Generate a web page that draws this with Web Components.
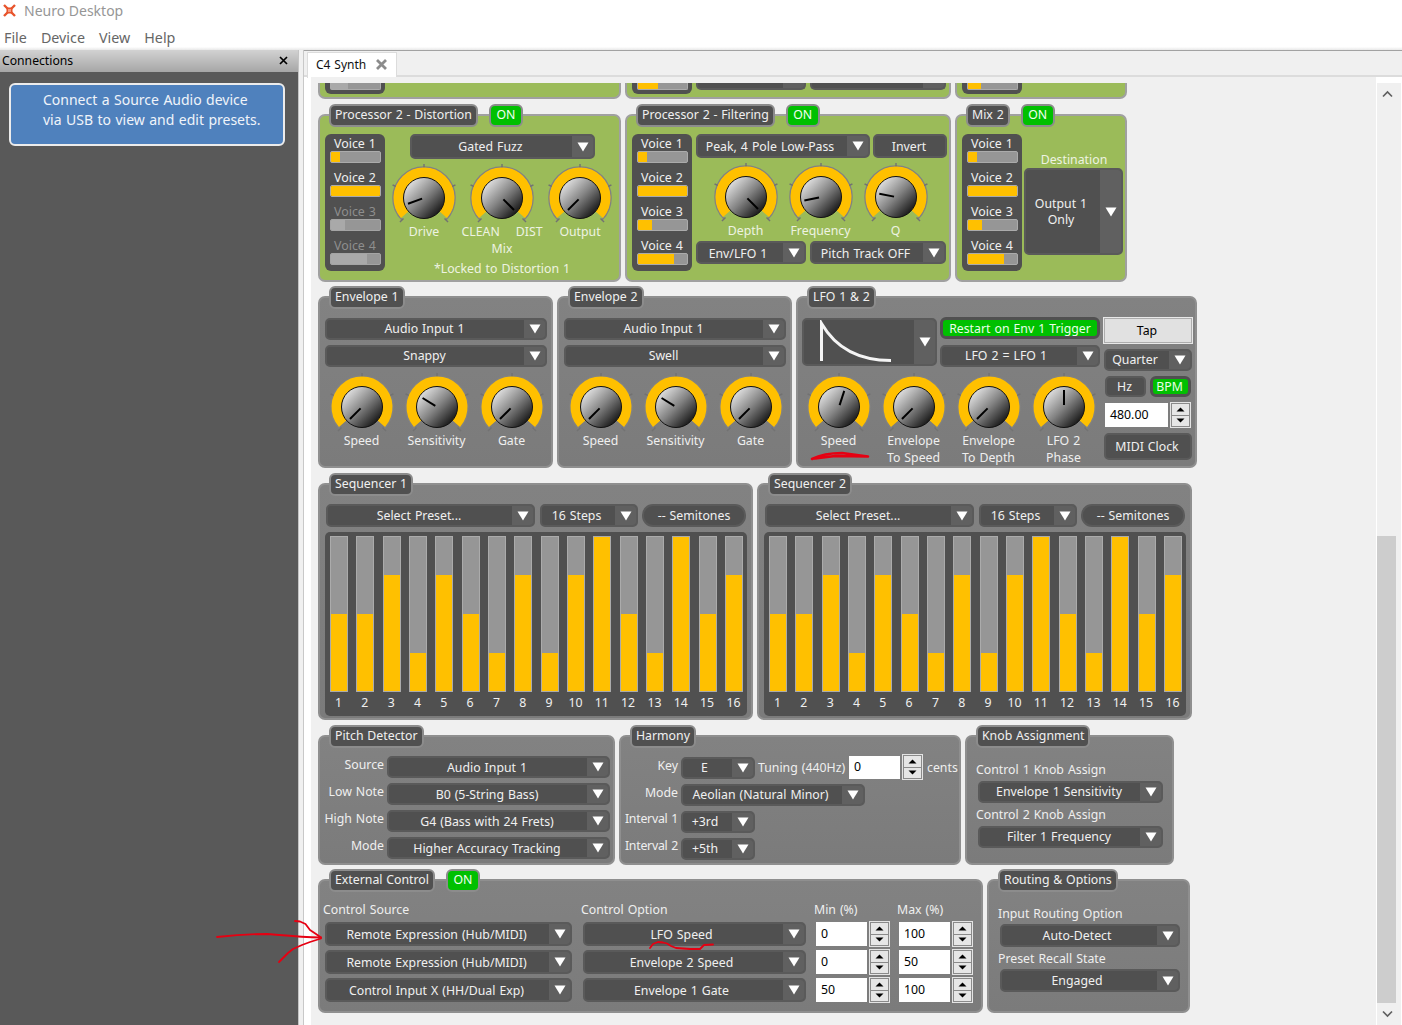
<!DOCTYPE html>
<html><head><meta charset="utf-8">
<style>
html,body{margin:0;padding:0;background:#fff;}
body{width:1402px;height:1025px;overflow:hidden;position:relative;font:12.3px/17px "Noto Sans","Liberation Sans",sans-serif;word-spacing:.8px;color:#f0f0f0;display:flex;flex-direction:column;}
.row{display:flex;align-items:flex-start;}
.col{display:flex;flex-direction:column;}
.lb{line-height:17px;white-space:nowrap;}
.c{text-align:center;}
.form{display:grid;row-gap:5px;}
.form>.lb{text-align:right;}
.form>.tight{letter-spacing:-.25px;margin-top:-1px;}
</style>
</head><body>
<n-titlebar>Neuro Desktop</n-titlebar>
<n-menubar><span>File</span><span>Device</span><span>View</span><span>Help</span></n-menubar>
<n-main>
  <n-sidepane slot="side" heading="Connections">
    <n-notice>Connect a Source Audio device<br>via USB to view and edit presets.</n-notice>
  </n-sidepane>
  <n-tabhost tab="C4 Synth" slot="work">
    <n-grouprow gap="4" top="0">
      <n-panel stub tone="green" style="width:303px">
        <div class="row" style="margin-left:5px"><n-stubvoice v="35" off></n-stubvoice></div>
      </n-panel>
      <n-panel stub tone="green" style="width:326px">
        <div class="row" style="margin-left:5px"><n-stubvoice v="40"></n-stubvoice><n-stubsel style="width:110px;margin-left:4px"></n-stubsel><n-stubsel style="width:136px;margin-left:4px"></n-stubsel></div>
      </n-panel>
      <n-panel stub tone="green" style="width:172px">
        <div class="row" style="margin-left:5px"><n-stubvoice v="27"></n-stubvoice></div>
      </n-panel>
    </n-grouprow>

    <n-grouprow gap="4" top="15">
      <n-panel label="Processor 2 - Distortion" on tone="green" style="width:303px;height:168px">
        <div class="row" style="margin:7px 0 0 5px">
          <n-voices values="18,100,29,74" off="2,3"></n-voices>
          <div class="col" style="width:234px">
            <n-select style="width:185px;height:25px;margin-left:25px;--tr:3px">Gated Fuzz</n-select>
            <div class="row" style="margin-top:4px">
              <n-knob angle="-110" style="width:78px">Drive</n-knob>
              <n-knob angle="135" style="width:78px"><span class="lb" style="display:flex;justify-content:center;gap:16px"><span>CLEAN</span><span>DIST</span></span>Mix</n-knob>
              <n-knob angle="-135" style="width:78px">Output</n-knob>
            </div>
            <div class="lb c" style="margin-top:3px;color:#eef3e2">*Locked to Distortion 1</div>
          </div>
        </div>
      </n-panel>
      <n-panel label="Processor 2 - Filtering" on tone="green" style="width:326px;height:168px">
        <div class="row" style="margin:7px 0 0 5px">
          <n-voices values="18,100,29,74"></n-voices>
          <div class="col" style="margin-left:4px">
            <div class="row">
              <n-select style="width:174px;height:24px;--tr:5px">Peak, 4 Pole Low-Pass</n-select>
              <n-button style="width:74px;height:24px;margin-left:3px;padding-top:1px;padding-bottom:0">Invert</n-button>
            </div>
            <div class="row" style="margin:4px 0 0 12px">
              <n-knob angle="135" style="width:75px">Depth</n-knob>
              <n-knob angle="-102" style="width:75px">Frequency</n-knob>
              <n-knob angle="-79" style="width:75px">Q</n-knob>
            </div>
            <div class="row" style="margin-top:2px">
              <n-select down style="width:110px;height:23px;--tr:5px">Env/LFO 1</n-select>
              <n-select down style="width:136px;height:23px;margin-left:4px;--tr:4px">Pitch Track OFF</n-select>
            </div>
          </div>
        </div>
      </n-panel>
      <n-panel label="Mix 2" on tone="green" style="width:172px;height:168px">
        <div class="row" style="margin:7px 0 0 5px">
          <n-voices values="18,100,29,74"></n-voices>
          <div class="col" style="margin:17px 0 0 2px">
            <div class="lb c" style="color:#eef3e2;width:100px">Destination</div>
            <n-select style="width:99px;height:87px;--tr:4px">Output 1<br>Only</n-select>
          </div>
        </div>
      </n-panel>
    </n-grouprow>

    <n-grouprow gap="4" top="14">
      <n-panel label="Envelope 1" style="width:235px;height:172px">
        <div class="col" style="margin:9px 0 0 5px;gap:5px">
          <n-select up style="width:222px;height:22px">Audio Input 1</n-select>
          <n-select up style="width:222px;height:22px">Snappy</n-select>
        </div>
        <div class="row" style="margin:5px 0 0 4px">
          <n-knob angle="-135" style="width:75px">Speed</n-knob>
          <n-knob angle="-58" style="width:75px">Sensitivity</n-knob>
          <n-knob angle="-135" style="width:75px">Gate</n-knob>
        </div>
      </n-panel>
      <n-panel label="Envelope 2" style="width:235px;height:172px">
        <div class="col" style="margin:9px 0 0 5px;gap:5px">
          <n-select up style="width:222px;height:22px">Audio Input 1</n-select>
          <n-select up style="width:222px;height:22px">Swell</n-select>
        </div>
        <div class="row" style="margin:5px 0 0 4px">
          <n-knob angle="-135" style="width:75px">Speed</n-knob>
          <n-knob angle="-58" style="width:75px">Sensitivity</n-knob>
          <n-knob angle="-135" style="width:75px">Gate</n-knob>
        </div>
      </n-panel>
      <n-panel label="LFO 1 &amp; 2" style="width:401px;height:172px">
        <div class="row" style="margin:8px 0 0 4px">
          <div class="col" style="width:301px">
            <div class="row">
              <n-select style="width:135px;height:48px;margin-top:1px"><svg width="100" height="46" viewBox="0 0 100 46" style="display:block;margin-left:8px"><path d="M9.5 41V3.500C22 25 42 40.500 79 40.500" fill="none" stroke="#f4f4f4" stroke-width="3"/></svg></n-select>
              <div class="col" style="margin-left:3px;gap:6px">
                <n-button kind="green" style="width:160px;height:22px">Restart on Env 1 Trigger</n-button>
                <n-select up style="width:160px;height:22px;--tr:7px">LFO 2 = LFO 1</n-select>
              </div>
            </div>
            <div class="row" style="margin-top:5px;margin-left:-1px">
              <n-knob angle="18" style="width:75px">Speed</n-knob>
              <n-knob angle="-135" style="width:75px">Envelope<br>To Speed</n-knob>
              <n-knob angle="-135" style="width:75px">Envelope<br>To Depth</n-knob>
              <n-knob angle="0" style="width:75px">LFO 2<br>Phase</n-knob>
            </div>
          </div>
          <div class="col" style="width:90px">
            <n-button kind="light" style="width:90px;height:27px">Tap</n-button>
            <n-select up style="width:88px;height:22px;margin:5px 0 0 1px;--tr:5px" >Quarter</n-select>
            <div class="row" style="margin:5px 0 0 2px;gap:4px">
              <n-button style="width:41px;height:21px">Hz</n-button>
              <n-button kind="green" style="width:41px;height:21px;padding-right:2px">BPM</n-button>
            </div>
            <div class="row" style="margin:5px 0 0 2px;gap:2px;align-items:center">
              <n-num style="width:63px;height:24px">480.00</n-num><n-spin></n-spin>
            </div>
            <n-button style="width:88px;height:27px;margin:5px 0 0 1px">MIDI Clock</n-button>
          </div>
        </div>
      </n-panel>
    </n-grouprow>

    <n-grouprow gap="4" top="15">
      <n-panel label="Sequencer 1" style="width:435px;height:237px">
        <div class="row" style="margin:8px 0 0 6px">
          <n-select style="width:209px;height:23px">Select Preset...</n-select>
          <n-select style="width:98px;height:23px;margin-left:5px;--tr:4px">16 Steps</n-select>
          <n-button round style="width:104px;height:23px;margin-left:4px;padding-right:0">-- Semitones</n-button>
        </div>
        <n-seq values="50,50,75,25,75,50,25,75,25,75,100,50,25,100,50,75" style="margin:5px 0 0 5px"></n-seq>
      </n-panel>
      <n-panel label="Sequencer 2" style="width:435px;height:237px">
        <div class="row" style="margin:8px 0 0 6px">
          <n-select style="width:209px;height:23px">Select Preset...</n-select>
          <n-select style="width:98px;height:23px;margin-left:5px;--tr:4px">16 Steps</n-select>
          <n-button round style="width:104px;height:23px;margin-left:4px;padding-right:0">-- Semitones</n-button>
        </div>
        <n-seq values="50,50,75,25,75,50,25,75,25,75,100,50,25,100,50,75" style="margin:5px 0 0 5px"></n-seq>
      </n-panel>
    </n-grouprow>

    <n-grouprow gap="4" top="15">
      <n-panel label="Pitch Detector" style="width:297px;height:130px">
        <div class="form" style="grid-template-columns:64px 223px;column-gap:3px;margin-top:8px;grid-auto-rows:22px">
          <div class="lb">Source</div><n-select>Audio Input 1</n-select>
          <div class="lb">Low Note</div><n-select>B0 (5-String Bass)</n-select>
          <div class="lb">High Note</div><n-select>G4 (Bass with 24 Frets)</n-select>
          <div class="lb">Mode</div><n-select>Higher Accuracy Tracking</n-select>
        </div>
      </n-panel>
      <n-panel label="Harmony" style="width:342px;height:130px">
        <div class="form" style="grid-template-columns:57px auto;column-gap:3px;margin-top:9px;grid-auto-rows:22px;justify-content:start">
          <div class="lb">Key</div>
          <div class="row" style="align-items:center;height:22px">
            <n-select up style="width:74px;height:22px;--tr:6px">E</n-select>
            <div class="lb" style="margin:0 0 2px 3px;width:91px">Tuning (440Hz)</div>
            <n-num style="width:51px;height:23px;margin-top:-1px">0</n-num>
            <n-spin style="margin:-2px 0 0 2px"></n-spin>
            <div class="lb" style="margin:0 0 2px 4px">cents</div>
          </div>
          <div class="lb">Mode</div><n-select up style="width:184px;--tr:4px">Aeolian (Natural Minor)</n-select>
          <div class="lb tight">Interval 1</div><n-select up style="width:74px;--tr:5px">+3rd</n-select>
          <div class="lb tight">Interval 2</div><n-select up style="width:74px;--tr:5px">+5th</n-select>
        </div>
      </n-panel>
      <n-panel label="Knob Assignment" style="width:209px;height:130px">
        <div class="col" style="margin:13px 0 0 9px">
          <div class="lb">Control 1 Knob Assign</div>
          <n-select up style="width:185px;height:22px;margin:3px 0 0 2px">Envelope 1 Sensitivity</n-select>
          <div class="lb" style="margin-top:3px">Control 2 Knob Assign</div>
          <n-select up style="width:185px;height:22px;margin:3px 0 0 2px">Filter 1 Frequency</n-select>
        </div>
      </n-panel>
    </n-grouprow>

    <n-grouprow gap="4" top="14">
      <n-panel label="External Control" on style="width:665px;height:134px">
        <div class="col" style="margin:9px 0 0 5px;gap:4px">
          <div class="row" style="height:17px">
            <div class="lb" style="width:258px;margin-left:-2px">Control Source</div>
            <div class="lb" style="width:233px">Control Option</div>
            <div class="lb" style="width:83px">Min (%)</div>
            <div class="lb">Max (%)</div>
          </div>
          <n-extrow a="Remote Expression (Hub/MIDI)" b="LFO Speed" min="0" max="100"></n-extrow>
          <n-extrow a="Remote Expression (Hub/MIDI)" b="Envelope 2 Speed" min="0" max="50"></n-extrow>
          <n-extrow a="Control Input X (HH/Dual Exp)" b="Envelope 1 Gate" min="50" max="100"></n-extrow>
        </div>
      </n-panel>
      <n-panel label="Routing &amp; Options" style="width:203px;height:134px">
        <div class="col" style="margin:13px 0 0 9px">
          <div class="lb">Input Routing Option</div>
          <n-select style="width:180px;height:23px;margin:2px 0 0 2px;--tr:5px">Auto-Detect</n-select>
          <div class="lb" style="margin-top:3px">Preset Recall State</div>
          <n-select style="width:180px;height:23px;margin:2px 0 0 2px;--tr:5px">Engaged</n-select>
        </div>
      </n-panel>
    </n-grouprow>
  </n-tabhost>
</n-main>
<n-scribble></n-scribble>

<script>
function def(name,css,html,init){
  customElements.define(name,class extends HTMLElement{
    constructor(){super();this.attachShadow({mode:'open'});}
    connectedCallback(){
      if(this._d)return;this._d=1;
      const h=typeof html==='function'?html(this):html;
      this.shadowRoot.innerHTML='<style>'+css+'</style>'+h;
      if(init)init(this);
    }
  });
}
const tri='<svg width="12" height="10" viewBox="0 0 12 10"><polygon points="0.500,0.500 11.500,0.500 6,9.500" fill="#fff"/></svg>';

def('n-titlebar',':host{display:flex;align-items:center;height:24px;flex:none;color:#969696;font:14px "Noto Sans",sans-serif;word-spacing:normal;background:#fff}svg{margin:-3px 8px 0 3px;display:block}span{position:relative;top:-2px}',
 '<svg width="13" height="13" viewBox="0 0 13 13"><path d="M1 1L12 12M12 1L1 12" stroke="#e8542c" stroke-width="2.400"/><rect x="3.500" y="3.500" width="6" height="6" fill="#e8542c"/><rect x="5" y="5" width="3" height="3" fill="#f59a7f"/></svg><span><slot></slot></span>');
def('n-menubar',':host{display:flex;height:26px;flex:none;align-items:center;padding-left:4px;gap:14px;color:#666;font:14.3px "Noto Sans",sans-serif;word-spacing:normal;background:linear-gradient(#fff 88%,#e8e8e8);box-sizing:border-box}',
 '<slot></slot>');
def('n-main',':host{display:flex;flex:1;min-height:0;}::slotted([slot=side]){flex:none}::slotted([slot=work]){flex:1}.split{width:6px;flex:none;background:#f0f0f0;box-sizing:border-box;border-left:1px solid #c4c4c4;border-right:1px solid #c8c8c8}',
 '<slot name="side"></slot><div class="split"></div><slot name="work"></slot>');
def('n-sidepane',':host{display:block;width:298px;background:#595959;height:100%}.h{height:22px;box-sizing:border-box;padding:0 10px 2px 2px;display:flex;align-items:center;justify-content:space-between;background:linear-gradient(#d2d2d2,#a6a6a6);color:#000;font-size:12.200px}svg{display:block}',
 e=>`<div class="h"><span>${e.getAttribute('heading')}</span><svg width="9" height="9"><path d="M1 1L8 8M8 1L1 8" stroke="#000" stroke-width="1.700"/></svg></div><slot></slot>`);
def('n-notice',':host{display:block;box-sizing:border-box;margin:11px 0 0 9px;width:276px;height:63px;border:2px solid #ececec;border-radius:6px;background:#4f81bd;color:#f0f4fa;font-size:14px;word-spacing:.8px;line-height:20px;padding:4.500px 0 0 32px;white-space:nowrap}','<slot></slot>');
def('n-tabhost',':host{display:flex;flex-direction:column;min-width:0;background:#fff}'+
 '.strip{height:27px;flex:none;box-sizing:border-box;border-top:1px solid #a2a2a2;background:linear-gradient(#f0f0f0 92%,#dcdcdc 92%);padding:1px 0 0 3px}'+
 '.tab{width:90px;height:26px;box-sizing:border-box;background:#fff;border:1px solid #dcdcdc;border-bottom:0;display:flex;align-items:center;justify-content:space-between;padding:0 9px 2px 8px;color:#111;font-size:12px;white-space:nowrap}'+
 '.body{flex:1;display:flex;min-height:0;padding-left:7px}'+
 '.scroll{flex:1;background:#f0f0f0;padding:6px 0 0 7px;overflow:hidden;min-width:0}'+
 '.bar{flex:none;margin-top:6px;border-left:1px solid #fff;border-right:1px solid #fff;box-sizing:border-box;background:#f0f0f0;display:flex;flex-direction:column;align-items:flex-start;width:26px}'+
 '.bar svg{display:block;margin-left:5px}.th{width:19px;height:467px;background:#cdcdcd;margin:438px 0 0 0}',
 e=>`<div class="strip"><div class="tab"><span>${e.getAttribute('tab')}</span><svg width="11" height="11"><path d="M1 1L10 10M10 1L1 10" stroke="#8c8c8c" stroke-width="2.800"/></svg></div></div>
 <div class="body"><div class="scroll"><slot></slot></div><div class="bar"><svg width="11" height="8" style="margin-top:7px"><path d="M1 6.500L5.500 2L10 6.500" fill="none" stroke="#606060" stroke-width="1.700"/></svg><div class="th"></div><svg width="11" height="8" style="margin-top:7px"><path d="M1 1.500L5.500 6L10 1.500" fill="none" stroke="#606060" stroke-width="1.700"/></svg></div></div>`);
def('n-grouprow',':host{display:flex;align-items:flex-start}',e=>'<slot></slot>',e=>{e.style.gap=e.getAttribute('gap')+'px';e.style.marginTop=e.getAttribute('top')+'px';});
def('n-panel',
 ':host{display:block;box-sizing:border-box;flex:none;border:2px solid #8f8f8f;border-radius:7px;background:linear-gradient(#828282,#7b7b7b);color:#efefef}'+
 ':host([tone=green]){background:#9bbb59;border-color:#a0a0a0;color:#eef3e2}'+
 ':host([stub]){height:16px;border-top:0;border-radius:0 0 7px 7px;overflow:hidden}'+
 '.hd{display:flex;height:23px;margin:-12px 0 0 9px;gap:11px}'+
 '.tg{box-sizing:border-box;height:23px;border:2px solid #8c8c8c;border-radius:6px;background:#505050;color:#f0f0f0;padding:0 4px;line-height:18px;white-space:nowrap;word-spacing:.6px;font-size:12.300px}'+
 '.on{background:#00c000;width:34px;padding:0;text-align:center;color:#f2fff2}',
 e=>{ if(e.hasAttribute('stub'))return '<slot></slot>';
   return `<div class="hd"><div class="tg">${e.getAttribute('label').replace('&','&amp;')}</div>${e.hasAttribute('on')?'<div class="tg on">ON</div>':''}</div><slot></slot>`;});
def('n-select',':host{display:flex;box-sizing:border-box;border:2px solid #5a5a5a;border-radius:5px;background:#505050;color:#f0f0f0;overflow:hidden;line-height:16px;min-width:0}'+
 '.t{flex:1;min-width:0;display:flex;align-items:center;justify-content:center;text-align:center;white-space:nowrap;padding:1px var(--tr,2px) 0 0;box-sizing:border-box}'+
 ':host([up]) .t{padding-top:0;padding-bottom:1px}:host([down]) .t{padding-top:3px}'+
 '.a{width:21px;flex:none;background:#606060;display:flex;align-items:center;justify-content:center}.a svg{display:block}',
 '<div class="t"><div><slot></slot></div></div><div class="a">'+tri+'</div>');
def('n-button',':host{display:flex;box-sizing:border-box;align-items:center;justify-content:center;border:2px solid #5a5a5a;border-radius:5px;background:#505050;color:#f0f0f0;white-space:nowrap;padding:0 2px 1px 0}'+
 ':host([round]){border-radius:11px}'+
 ':host([kind=green]){border:3px solid #505050;background:#00c000;color:#eaffea;border-radius:6px;padding:0}'+
 ':host([kind=light]){background:#e1e1e1;border:2px solid #adadad;border-radius:0;color:#000;outline:1px solid #e8e8e8;outline-offset:-1px}','<slot></slot>');
def('n-num',':host{display:flex;align-items:center;box-sizing:border-box;background:#fff;color:#000;padding:0 5px 2px;flex:none}','<slot></slot>');
def('n-spin',':host{display:flex;flex-direction:column;justify-content:space-between;box-sizing:border-box;flex:none;width:21px;height:26px;border:1px solid #e4e4e4;padding:1px;background:#8a8a8a}'+
 'div{height:10.500px;background:#e6e6e6;display:flex;align-items:center;justify-content:center}svg{display:block}',
 '<div><svg width="9" height="5"><polygon points="0.500,4.500 8.500,4.500 4.500,0.500" fill="#000"/></svg></div><div><svg width="9" height="5"><polygon points="0.500,0.500 8.500,0.500 4.500,4.500" fill="#000"/></svg></div>');
def('n-voices',':host{display:block;box-sizing:border-box;width:60px;height:137px;background:#505050;border-radius:6px;padding-top:1px;flex:none}'+
 '.it{height:34px}.l{height:16px;line-height:18px;text-align:center;color:#f0f0f0;font-size:12.400px}'+
 '.b{box-sizing:border-box;width:51px;height:12px;margin-left:5px;border:1px solid #ababab;border-radius:2px;background:#969696;overflow:hidden}.f{height:100%;background:#ffc000}'+
 '.off .l{color:#8e8e8e}.off .f{background:#a9a9a9}.off .b{border-color:#a4a4a4}',
 e=>{const v=e.getAttribute('values').split(',');const off=(e.getAttribute('off')||'').split(',');
   return v.map((x,i)=>`<div class="it ${off.includes(''+i)?'off':''}"><div class="l">Voice ${i+1}</div><div class="b"><div class="f" style="width:${x}%"></div></div></div>`).join('');});
def('n-stubvoice',':host{display:block;width:60px;height:11px;background:#505050;border-radius:0 0 6px 6px;flex:none}.b{box-sizing:border-box;width:51px;height:7px;margin-left:5px;border:1px solid #ababab;border-top:0;border-radius:0 0 2px 2px;background:#969696}.f{height:100%;background:#ffc000}:host([off]) .f{background:#a9a9a9}',
 e=>`<div class="b"><div class="f" style="width:${e.getAttribute('v')}%"></div></div>`);
def('n-stubsel',':host{display:block;height:7px;background:#505050;border:2px solid #5a5a5a;border-top:0;box-sizing:border-box;border-radius:0 0 5px 5px;flex:none;overflow:hidden}i{display:block;margin-left:auto;width:21px;height:100%;background:#606060}','<i></i>');
function pt(r,a){const t=a*Math.PI/180;return (35+r*Math.sin(t)).toFixed(2)+' '+(35-r*Math.cos(t)).toFixed(2);}
function arc(r,a,b){return `M${pt(r,a)}A${r} ${r} 0 1 1 ${pt(r,b)}`;}
def('n-knob',':host{display:block;flex:none;text-align:center;line-height:17px;color:inherit}svg{display:block;margin:0 0 -10px 0;position:relative;left:50%;transform:translateX(-50%)}.l{white-space:nowrap}',
 e=>{const ang=+e.getAttribute('angle');
   const ticks=[-135,-67.5,0,67.5,135].map(a=>`<path d="M${pt(29,a)}L${pt(34,a)}" stroke="#727272" stroke-width="1.400"/>`).join('');
   return `<svg width="70" height="70" viewBox="0 0 70 70"><defs><linearGradient id="k" x1="0.150" y1="0.150" x2="0.850" y2="0.850"><stop offset="0" stop-color="#dcdcdc"/><stop offset=".5" stop-color="#838383"/><stop offset="1" stop-color="#1c1c1c"/></linearGradient></defs>
   <path d="${arc(31,-135,135)}" fill="none" stroke="#828282" stroke-width="1.600"/>${ticks}
   <path d="${arc(25,-131,131)}" fill="none" stroke="#ffc000" stroke-width="11"/>
   <circle cx="35" cy="35" r="20.500" fill="url(#k)" stroke="#111" stroke-width="1"/>
   <path d="M${pt(2,ang)}L${pt(17,ang)}" stroke="#000" stroke-width="2"/></svg><div class="l"><slot></slot></div>`;});
def('n-seq',':host{display:flex;justify-content:space-between;box-sizing:border-box;width:422px;height:184px;background:#505050;border-radius:5px;padding:4px 4px 0 5px}'+
 '.s{width:18px;flex:none}.b{box-sizing:border-box;height:156px;border:1px solid #ababab;background:#969696;display:flex;align-items:flex-end}.f{width:100%;background:#ffc000}.n{height:18px;line-height:22px;text-align:center;color:#f0f0f0;white-space:nowrap;display:flex;justify-content:center;padding-right:1px}',
 e=>e.getAttribute('values').split(',').map((v,i)=>`<div class="s"><div class="b"><div class="f" style="height:${Math.min(154,Math.round(v*1.56)-1)}px"></div></div><div class="n">${i+1}</div></div>`).join(''));
def('n-extrow',':host{display:flex;align-items:center;height:24px}n-select{height:24px}n-num{width:51px;height:24px}n-spin{margin-left:2px}',
 e=>`<n-select style="width:247px;--tr:3px">${e.getAttribute('a')}</n-select><n-select style="width:223px;margin-left:11px;--tr:5px">${e.getAttribute('b')}</n-select>
 <n-num style="margin-left:10px">${e.getAttribute('min')}</n-num><n-spin></n-spin><n-num style="margin-left:9px">${e.getAttribute('max')}</n-num><n-spin></n-spin>`);
def('n-scribble',':host{position:absolute;left:0;top:0;width:1402px;height:1025px;pointer-events:none}svg{display:block}',
 `<svg width="1402" height="1025" fill="none" stroke="#e60012" stroke-width="1.800" stroke-linecap="round" stroke-linejoin="round">
 <path d="M217 937C235 935 255 934 267 934C280 935 300 937 321 937.500"/>
 <path d="M295 921L300 921.500L305.500 924L310 930L316 934L321 937.500"/>
 <path d="M321 938.500L310 942L302 945L293 949L288 953L279 962"/>
 <path d="M650 948L653 944L658 942L663 942.500L667 943.500L671 946L676 948L690 949L700 949L704 945L713 944.500"/>
 <path d="M812 459C820 455 830 453 842 453L868 456.500L835 456L815 458.500" stroke-width="2.600"/></svg>`);
</script>
</body></html>
